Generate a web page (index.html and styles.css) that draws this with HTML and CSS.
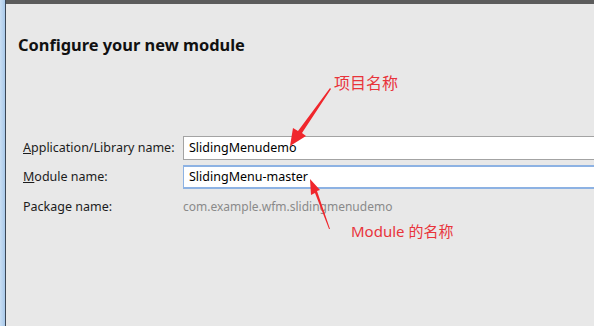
FILE: index.html
```html
<!DOCTYPE html>
<html lang="zh-CN">
<head>
    <meta charset="UTF-8">
    <meta name="viewport" content="width=device-width, initial-scale=1.0">
    <title>Configure your new module</title>
    <link rel="stylesheet" href="styles.css">
</head>
<body>
    <div class="frame">
        <div class="edge"></div>
        <div class="main">
            <div class="topbar"></div>
            <h1 class="title">Configure your new module</h1>
            <div class="form">
                <label class="lbl"><u>A</u>pplication/Library name:</label>
                <div class="field">SlidingMenudemo</div>
                <label class="lbl"><u>M</u>odule name:</label>
                <div class="field focus">SlidingMenu-master</div>
                <label class="lbl">Package name:</label>
                <div class="value">com.example.wfm.slidingmenudemo</div>
            </div>
        </div>
    </div>

    <!-- red annotations drawn over the dialog -->
    <p class="note note1">项目名称</p>
    <p class="note note2">Module 的名称</p>
    <svg class="arrows" width="594" height="326" viewBox="0 0 594 326">
        <polygon fill="#f0262c" points="330,88 331,89 302,133 306,136 290,146 293,128 298,131"/>
        <polygon fill="#f0262c" points="330,229 329,229 315,193 311,195 310,179 320,190 317,191"/>
    </svg>
</body>
</html>
```
FILE: styles.css
```css
body {
    margin: 0;
    width: 594px;
    height: 326px;
    overflow: hidden;
    background-color: #e8e8e8;
    font-family: "Noto Sans", "Liberation Sans", sans-serif;
    position: relative;
}

.frame {
    display: flex;
    height: 326px;
}

.edge {
    flex-shrink: 0;
    width: 5px;
    background: linear-gradient(to right, #c9def3, #a9c9ea);
    border-right: 1px solid #3a4656;
}

.main {
    flex: 1;
    min-width: 0;
    overflow: hidden;
}

.topbar {
    height: 4px;
    background-color: #5c5c5c;
}

.title {
    margin: 30px 0 0 12px;
    font-size: 16.4px;
    font-weight: bold;
    color: #111;
    line-height: 22px;
}

.form {
    display: grid;
    grid-template-columns: 160px 460px;
    row-gap: 5px;
    margin: 80px 0 0 17px;
    font-size: 12.5px;
    color: #1c1c1c;
    align-items: center;
}

.lbl {
    line-height: 24px;
}

.field {
    height: 22px;
    line-height: 22px;
    padding-left: 5px;
    background-color: #fff;
    border: 1px solid #a3a3a3;
    color: #000;
    font-size: 12.5px;
}

.focus {
    border: 2px solid #8db2e3;
    border-left-width: 1px;
    height: 20px;
    line-height: 20px;
}

.value {
    line-height: 26px;
    color: #8a8a8a;
    font-size: 12px;
}

.note {
    position: absolute;
    margin: 0;
    color: #e8343b;
    font-family: "Noto Sans", "Noto Sans CJK SC", sans-serif;
    font-size: 15px;
    line-height: 20px;
}

.note1 {
    left: 334px;
    top: 73px;
    font-size: 16px;
}

.note2 {
    left: 351px;
    top: 221px;
}

.arrows {
    position: absolute;
    left: 0;
    top: 0;
}
```
